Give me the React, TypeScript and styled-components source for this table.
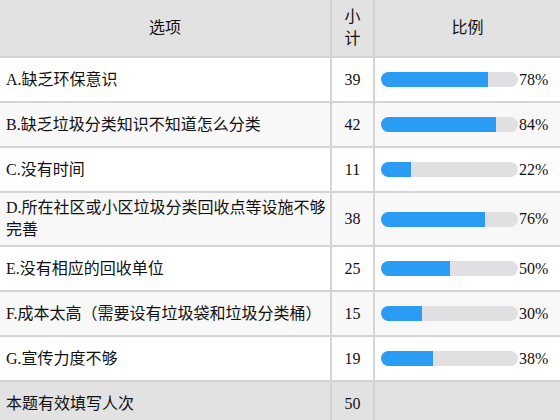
import React from 'react';
import styled, { createGlobalStyle } from 'styled-components';

interface Item {
  label: string;
  count: number;
  percent: number;
}

const items: Item[] = [
  { label: 'A.缺乏环保意识', count: 39, percent: 78 },
  { label: 'B.缺乏垃圾分类知识不知道怎么分类', count: 42, percent: 84 },
  { label: 'C.没有时间', count: 11, percent: 22 },
  { label: 'D.所在社区或小区垃圾分类回收点等设施不够完善', count: 38, percent: 76 },
  { label: 'E.没有相应的回收单位', count: 25, percent: 50 },
  { label: 'F.成本太高（需要设有垃圾袋和垃圾分类桶）', count: 15, percent: 30 },
  { label: 'G.宣传力度不够', count: 19, percent: 38 },
];

const GlobalStyle = createGlobalStyle`
  body {
    margin: 0;
    background: #fff;
    font-family: 'Liberation Serif', 'Noto Sans CJK SC', serif;
    color: #111;
  }
`;

const App: React.FC = () => {
  return (
    <>
      <GlobalStyle />
      <Table>
        <colgroup>
          <col style={{ width: 331 }} />
          <col style={{ width: 43 }} />
          <col />
        </colgroup>
        <thead>
          <tr>
            <HeadCell>选项</HeadCell>
            <HeadCell>小计</HeadCell>
            <HeadCell last>比例</HeadCell>
          </tr>
        </thead>
        <tbody>
          {items.map((item, i) => (
            <Row key={item.label} striped={i % 2 === 1}>
              <LabelCell>{item.label}</LabelCell>
              <CountCell>{item.count}</CountCell>
              <RatioCell>
                <RatioWrap>
                  <Track>
                    <Fill style={{ width: `${item.percent}%` }} />
                  </Track>
                  <Percent>{item.percent}%</Percent>
                </RatioWrap>
              </RatioCell>
            </Row>
          ))}
          <SummaryRow>
            <LabelCell>本题有效填写人次</LabelCell>
            <CountCell>50</CountCell>
            <RatioCell />
          </SummaryRow>
        </tbody>
      </Table>
    </>
  );
};

export default App;

const Table = styled.table`
  width: 560px;
  border-collapse: collapse;
  table-layout: fixed;
  font-size: 16px;
  line-height: 22px;
`;

const HeadCell = styled.th<{ last?: boolean }>`
  background: #e2e2e2;
  font-weight: normal;
  text-align: center;
  padding: 5px 6px;
  height: 46px;
  border-bottom: 2px solid #d4d4d4;
  border-right: ${props => (props.last ? 'none' : '2px solid #d4d4d4')};
`;

const Row = styled.tr<{ striped: boolean }>`
  background: ${props => (props.striped ? '#f8f8f8' : '#ffffff')};
`;

const SummaryRow = styled.tr`
  background: #e2e2e2;
`;

const LabelCell = styled.td`
  height: 35px;
  padding: 4px 4px 4px 6px;
  vertical-align: middle;
  border-bottom: 2px solid #d4d4d4;
  border-right: 2px solid #d4d4d4;
`;

const CountCell = styled.td`
  text-align: center;
  padding: 4px 0;
  vertical-align: middle;
  border-bottom: 2px solid #d4d4d4;
  border-right: 2px solid #d4d4d4;
`;

const RatioCell = styled.td`
  padding: 4px 0 4px 6px;
  vertical-align: middle;
  border-bottom: 2px solid #d4d4d4;
`;

const RatioWrap = styled.div`
  display: flex;
  align-items: center;
  gap: 1px;
`;

const Track = styled.div`
  width: 137px;
  height: 15px;
  border-radius: 8px;
  background: #e0e0e2;
  overflow: hidden;
  flex: none;
`;

const Fill = styled.div`
  height: 100%;
  background: #2b9cf3;
`;

const Percent = styled.span`
  font-size: 16px;
`;
